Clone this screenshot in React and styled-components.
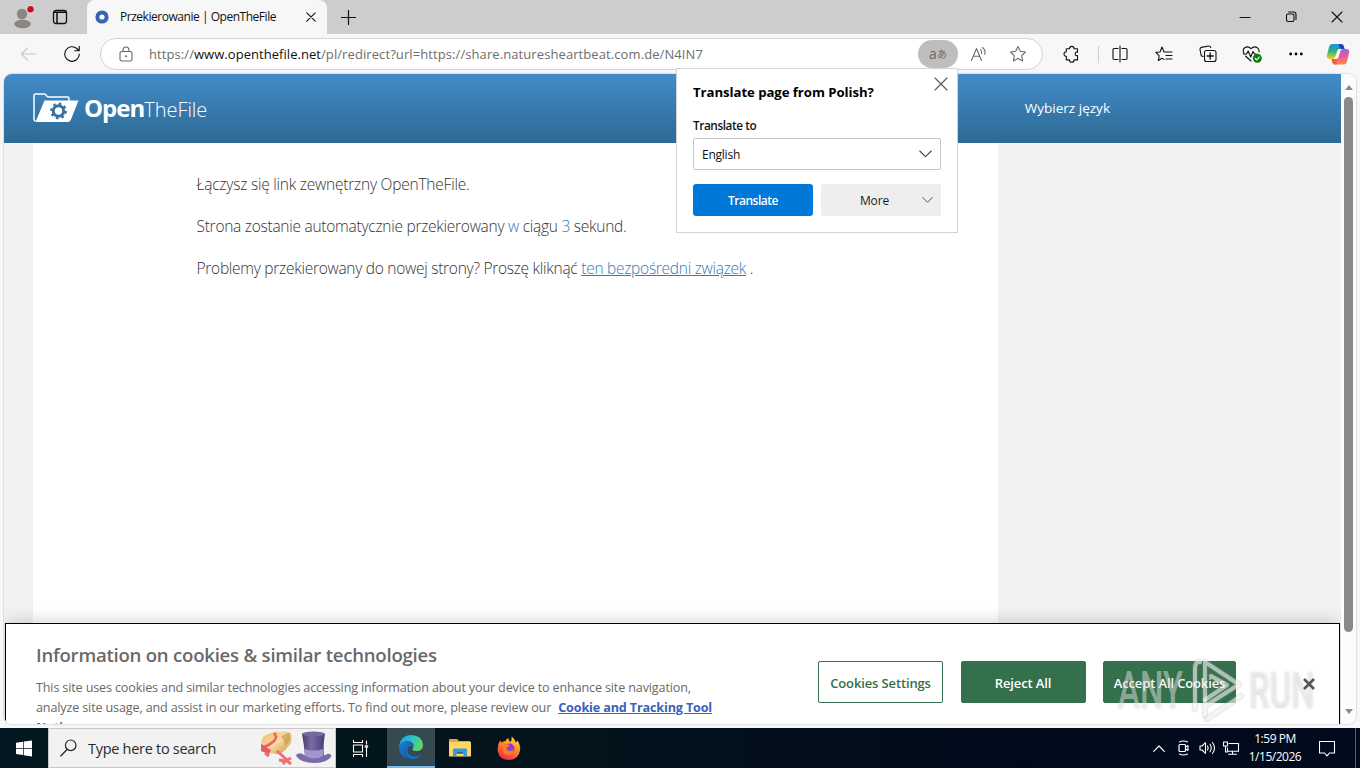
import React from "react";
import styled, { createGlobalStyle } from "styled-components";

export default function App() {
  return (
    <>
      <GlobalStyle />
      <Desktop>
        <TitleBar />
        <Toolbar />
        <BrowserView />
        <Taskbar />
        <TranslatePopup />
        <Watermark />
      </Desktop>
    </>
  );
}

const TitleBar = () => (
  <TitleRow>
    <Cell $w={44}>
      <ProfileIcon />
    </Cell>
    <Cell $w={32}>
      <Icon width="16" height="16" viewBox="0 0 16 16">
        <rect x="1.5" y="1.5" width="13" height="13" rx="2.5" strokeWidth="1.3" />
        <path d="M2 3.3h12M5 4v10.5" strokeWidth="1.5" />
      </Icon>
    </Cell>
    <Tab>
      <svg width="14" height="14" viewBox="0 0 14 14">
        <circle cx="7" cy="7" r="4.6" fill="#fff" stroke="#3765b0" strokeWidth="4" />
      </svg>
      <Label $size={12} $spacing={-0.467}>
        Przekierowanie | OpenTheFile
      </Label>
      <Icon width="10" height="10" viewBox="0 0 10 10">
        <path d="M.8.8l8.4 8.4M9.2.8L.8 9.2" />
      </Icon>
    </Tab>
    <Cell $w={42}>
      <Icon width="15" height="15" viewBox="0 0 15 15">
        <path d="M7.5.5v14M.5 7.5h14" strokeWidth="1.2" />
      </Icon>
    </Cell>
    <WindowButtons>
      <Cell $w={46}>
        <Icon width="12" height="12" viewBox="0 0 12 12">
          <path d="M1 6.5h10" />
        </Icon>
      </Cell>
      <Cell $w={46}>
        <Icon width="12" height="12" viewBox="0 0 12 12">
          <rect x="1.5" y="3" width="7.5" height="7.5" rx="1.5" />
          <path d="M3.5 1h5Q11 1 11 3.5v5" />
        </Icon>
      </Cell>
      <Cell $w={46}>
        <Icon width="12" height="12" viewBox="0 0 12 12">
          <path d="M1 1l10 10M11 1L1 11" />
        </Icon>
      </Cell>
    </WindowButtons>
  </TitleRow>
);

const ProfileIcon = () => (
  <svg width="24" height="24" viewBox="0 0 24 24">
    <circle cx="12" cy="9" r="5.2" fill="#8b8683" />
    <ellipse cx="12.5" cy="19" rx="8.3" ry="4.2" fill="#8b8683" />
    <circle cx="20.5" cy="4.3" r="3.8" fill="#c50f1f" stroke="#e3cfcf" strokeWidth="1.2" />
  </svg>
);

const Toolbar = () => (
  <ToolRow>
    <Cell $w={44} $color="#c8c8c8">
      <Icon width="17" height="14" viewBox="0 0 17 14">
        <path d="M16 7H1.5M7.5 1l-6 6 6 6" />
      </Icon>
    </Cell>
    <Cell $w={44}>
      <Icon width="18" height="18" viewBox="0 0 18 18">
        <path d="M16.3 9A7.300 7.300 0 1 1 13.800 3.500L16 5.500M16.200 1.200v4.500h-4.500" />
      </Icon>
    </Cell>
    <AddressBar>
      <Cell $w={49} $color="#666">
        <Icon width="14" height="16" viewBox="0 0 14 16">
          <rect x="1" y="5.500" width="12" height="9.500" rx="1.800" />
          <path d="M4 5.500V4a3 3 0 0 1 6 0v1.500" />
          <circle cx="7" cy="10.200" r=".5" />
        </Icon>
      </Cell>
      <Url>
        <Label $size={13} $spacing={0.082} $color="#6e6e6e">
          https://
        </Label>
        <Label $size={13} $spacing={0.044}>
          www.openthefile.net
        </Label>
        <Label $size={13} $spacing={0.089} $color="#6e6e6e">
          /pl/redirect?url=https://share.naturesheartbeat.com.de/N4IN7
        </Label>
      </Url>
      <TranslateBadge>
        a<small>あ</small>
      </TranslateBadge>
      <Cell $w={40} $color="#6b6b6b">
        <Icon width="18" height="17" viewBox="0 0 18 17">
          <path d="M2.500 14.500L7.500 2.500l5 12M4.300 10.300h6.400" />
          <path d="M11.500 3.500q1.600 1.800 1 4M13.500 1.500q3.500 2.800 2.300 7" />
        </Icon>
      </Cell>
      <Cell $w={40} $color="#6b6b6b">
        <Icon width="18" height="18" viewBox="0 0 18 18">
          <path d={STAR} />
        </Icon>
      </Cell>
    </AddressBar>
    <Cell $w={44}>
      <Icon width="18" height="18" viewBox="0 0 18 18">
        <path d="M7.500 3.700a2.300 2.300 0 0 1 4.600 0H15.500v3.500q-2.300-.4-2.300 1.700t2.300 1.700v4.300h-3.400a2.300 2.300 0 0 1-4.600 0H4.300v-3.600a2.300 2.300 0 0 1 0-4.600v-3z" />
      </Icon>
    </Cell>
    <Separator />
    <Cell $w={31}>
      <Icon width="18" height="18" viewBox="0 0 18 18">
        <path d="M7 3.500H3.200Q2 3.500 2 4.700v8.600q0 1.200 1.200 1.200H7M11 3.500h3.800q1.200 0 1.200 1.200v8.600q0 1.200-1.200 1.200H11M9 1v16" />
      </Icon>
    </Cell>
    <MainTools>
      <Cell $w={44}>
        <Icon width="18" height="18" viewBox="0 0 18 18">
          <path d="M9 7L7 2 5 7 .8 7.400l3.400 3.400-.9 4.700L7 13.200l2 1.200M9.500 7H17M11 10.500h6M11 14h6" />
        </Icon>
      </Cell>
      <Cell $w={44}>
        <Icon width="18" height="18" viewBox="0 0 18 18">
          <path d="M4 11.500l-1.700-.7L1 4.500Q.8 2.800 2.500 2.400L9.500 1q1.700-.2 2.300 1.500" />
          <rect x="5.500" y="5.500" width="11.500" height="11" rx="2" />
          <path d="M11.200 8v6M8.200 11h6" strokeWidth="1.300" />
        </Icon>
      </Cell>
      <Cell $w={44}>
        <Icon width="20" height="18" viewBox="0 0 20 18">
          <path d="M2 8.500Q0 4.500 3 2.500q3.200-1.700 6 1.200 3-3 6-1.200 2.500 1.500 2 4.500M3.500 11L9 16" />
          <path d="M1.500 9h3l1.700-3 2.500 6L11 6.500l1.500 2.500H14" />
          <circle cx="15.300" cy="13.300" r="4.500" fill="#107c10" stroke="none" />
          <path d="M13.200 13.500l1.500 1.400 2.700-2.900" stroke="#fff" />
        </Icon>
      </Cell>
      <Cell $w={44}>
        <svg width="14" height="4" viewBox="0 0 14 4">
          <circle cx="1.700" cy="2" r="1.400" />
          <circle cx="7" cy="2" r="1.400" />
          <circle cx="12.300" cy="2" r="1.400" />
        </svg>
      </Cell>
      <Cell $w={40}>
        <CopilotIcon />
      </Cell>
    </MainTools>
  </ToolRow>
);

const STAR =
  "M9 1.500l2.300 4.800 5.200.7-3.800 3.700.9 5.200L9 13.400l-4.600 2.500.9-5.200L1.500 7l5.200-.7z";

const CopilotIcon = () => (
  <svg width="24" height="22" viewBox="0 0 24 22">
    <defs>
      <linearGradient id="cpa" x1="0" y1="0" x2="0" y2="1">
        <stop offset="0" stopColor="#1b8fe0" />
        <stop offset=".5" stopColor="#35b17b" />
        <stop offset="1" stopColor="#f5d018" />
      </linearGradient>
      <linearGradient id="cpb" x1="0" y1="0" x2="0" y2="1">
        <stop offset="0" stopColor="#a85ce6" />
        <stop offset=".5" stopColor="#ee5a8c" />
        <stop offset="1" stopColor="#fb8b48" />
      </linearGradient>
    </defs>
    <path d="M6 1h9q2 0 2.700 2l.8 3h-5q-1.700 0-2.200 1.700L9.200 14q-.7 2-2.700 2H4q-4 0-3-4l2-8q.8-3 3-3z" fill="url(#cpa)" />
    <path d="M13 1h2q2 0 2.700 2l.8 3h-3.300Q13.700 6 13 3.500z" fill="#1947b8" />
    <path d="M18 21.500H9q-2 0-2.600-2L5.500 16H10q2 0 2.500-1.700l2-6.600Q15 6 17 6h3q4 0 3 4l-2 8.500q-.8 3-3 3z" fill="url(#cpb)" />
    <path d="M11 21.500H9q-2 0-2.600-2L5.500 16h3.200q1.600 0 2.200 2.500z" fill="#f1603c" />
  </svg>
);

const BrowserView = () => (
  <Frame>
    <Viewport>
      <Page>
        <SiteHeader>
          <Brand>
            <FolderLogo />
            <BrandName>
              <Label $size={24} $weight={700} $spacing={-1}>
                Open
              </Label>
              <Label $size={20} $weight={300} $spacing={-0.05}>
                TheFile
              </Label>
            </BrandName>
          </Brand>
          <Label $size={13.5} $spacing={0.02}>
            Wybierz język
          </Label>
        </SiteHeader>
        <Content>
          <Paragraph $spacing={-0.222}>Łączysz się link zewnętrzny OpenTheFile.</Paragraph>
          <Paragraph $spacing={-0.261}>
            Strona zostanie automatycznie przekierowany <em>w</em> ciągu <em>3</em> sekund.
          </Paragraph>
          <Paragraph $spacing={-0.27}>
            Problemy przekierowany do nowej strony? Proszę kliknąć{" "}
            <a>ten bezpośredni związek</a> .
          </Paragraph>
        </Content>
        <CookieBanner />
      </Page>
      <ScrollTrack>
        <Arrow />
        <Thumb />
        <Arrow $down />
      </ScrollTrack>
    </Viewport>
  </Frame>
);

const FolderLogo = () => (
  <svg width="46" height="30" viewBox="0 0 46 30">
    <path
      d="M2.500 28Q1 28 1 26.500V2.500Q1 1 2.500 1h9q1.200 0 1.800 1.500T15.500 4h19Q36 4 36 5.500V8"
      fill="none"
      stroke="#fff"
      strokeWidth="1.500"
    />
    <path d="M11.500 7.500h34L38 26.500Q37 29 34.500 29H2.500z" fill="#fff" />
    <circle cx="25.500" cy="18" r="5.200" fill="none" stroke="#37709f" strokeWidth="3" />
    <circle cx="25.500" cy="18" r="7.300" fill="none" stroke="#37709f" strokeWidth="2.200" strokeDasharray="2.600 3.133" />
  </svg>
);

const CookieBanner = () => (
  <Banner>
    <BannerText>
      <h2>Information on cookies &amp; similar technologies</h2>
      <p>
        This site uses cookies and similar technologies accessing information about your device to
        enhance site navigation,
        <br />
        analyze site usage, and assist in our marketing efforts. To find out more, please review our
        <a>Cookie and Tracking Tool</a>
        <br />
        <a>Notice</a>
      </p>
    </BannerText>
    <BannerButtons>
      <BannerButton $w={125} $outline>
        Cookies Settings
      </BannerButton>
      <BannerButton $w={125}>Reject All</BannerButton>
      <BannerButton $w={133}>Accept All Cookies</BannerButton>
    </BannerButtons>
  </Banner>
);

const TranslatePopup = () => (
  <Popup>
    <PopupHead>
      <Label $size={13.2} $weight={700} $spacing={-0.06} $color="#000">
        Translate page from Polish?
      </Label>
      <Icon width="14" height="14" viewBox="0 0 14 14">
        <path d="M1 1l12 12M13 1L1 13" />
      </Icon>
    </PopupHead>
    <Label $size={11.8} $weight={600} $spacing={-0.42}>
      Translate to
    </Label>
    <Select>
      <Label $size={12} $spacing={-0.24}>
        English
      </Label>
      <Chevron $size={13} />
    </Select>
    <PopupActions>
      <PopupButton $primary>Translate</PopupButton>
      <PopupButton>
        More
        <Chevron $size={11} />
      </PopupButton>
    </PopupActions>
  </Popup>
);

const Chevron = ({ $size }) => (
  <Icon width={$size} height={8} viewBox="0 0 13 8" color="#444">
    <path d="M.8 1l5.700 5.700L12.200 1" />
  </Icon>
);

const Watermark = () => (
  <Mark>
    <MarkText>ANY</MarkText>
    <svg width="56" height="66" viewBox="0 0 56 66">
      <g fill="none" strokeLinejoin="round" strokeLinecap="round">
        <g stroke="#999" strokeOpacity=".22" strokeWidth="6.500">
          <path d="M11 5Q6 4 6 12v40M16 58V5l34 22.500-33 21" />
          <path d="M18 62l34-23M22 19l16 9-22 15" />
        </g>
        <g stroke="#fff" strokeOpacity=".55" strokeWidth="4">
          <path d="M11 5Q6 4 6 12v40M16 58V5l34 22.500-33 21" />
          <path d="M18 62l34-23M22 19l16 9-22 15" />
        </g>
      </g>
    </svg>
    <MarkText>RUN</MarkText>
    <CloseMark width="14" height="14" viewBox="0 0 14 14">
      <path d="M2 2l10 10M12 2L2 12" strokeWidth="2.600" />
    </CloseMark>
  </Mark>
);

const Taskbar = () => (
  <TaskRow>
    <Cell $w={48}>
      <svg width="16" height="17" viewBox="0 0 16 17" fill="#fff">
        <path d="M0 2.700l7-1V8H0zM7.700 1.600L16 .5V8H7.700zM0 8.800h7v6.300l-7-1zM7.700 8.800H16v7.700l-8.300-1.200z" />
      </svg>
    </Cell>
    <Search>
      <Icon width="17" height="18" viewBox="0 0 17 18">
        <circle cx="10.700" cy="6.300" r="5.300" strokeWidth="1.200" />
        <path d="M7 10.500L.8 17" strokeWidth="1.200" />
      </Icon>
      <Label $size={14.5} $spacing={-0.286} $color="#2b2b2b">
        Type here to search
      </Label>
      <Hats />
    </Search>
    <Cell $w={48} $color="#fff">
      <Icon width="17" height="17" viewBox="0 0 17 17">
        <rect x="1.500" y="5" width="9" height="7" />
        <path d="M1.500.5v2h9v-2M1.500 16.500v-2h9v2M14.500 1v3M14.500 8v8.500" />
        <path d="M13.300 5.500h2.500v2h-2.500z" fill="#fff" strokeWidth=".5" />
      </Icon>
    </Cell>
    <ActiveTask>
      <EdgeIcon />
    </ActiveTask>
    <Cell $w={49}>
      <ExplorerIcon />
    </Cell>
    <Cell $w={49}>
      <FirefoxIcon />
    </Cell>
    <Tray>
      <Cell $w={24}>
        <Icon width="12" height="7" viewBox="0 0 12 7">
          <path d="M.7 6.300L6 1l5.300 5.300" strokeWidth="1.200" />
        </Icon>
      </Cell>
      <Cell $w={24}>
        <Icon width="13" height="16" viewBox="0 0 13 16">
          <rect x="2" y="4.500" width="6.500" height="7" rx="1" strokeWidth="1.200" />
          <path d="M8.500 7l2.500-1.500v5L8.500 9M2.500 2q4-2 8 0M2.500 14q4 2 8 0" />
        </Icon>
      </Cell>
      <Cell $w={24}>
        <Icon width="17" height="14" viewBox="0 0 17 14">
          <path d="M1 5v4h2l3.500 3.300V1.700L3 5zM8.500 5q1.200 2 0 4M11 3.200q2.500 3.800 0 7.600M13.500 1.500q4 5.500 0 11" />
        </Icon>
      </Cell>
      <Cell $w={24}>
        <Icon width="17" height="14" viewBox="0 0 17 14">
          <path d="M6 2.500h9.500v7.700h-11V7M9.500 10v3M5.500 13.300h8" />
          <path d="M.5 1h4v4h-4zM2.500 5v6h2" />
        </Icon>
      </Cell>
      <Clock>
        <span>1:59 PM</span>
        <span>1/15/2026</span>
      </Clock>
      <Cell $w={40}>
        <Icon width="17" height="17" viewBox="0 0 17 17">
          <path d="M.5 1.500h15v11.500h-5L8 15.800 5.500 13h-5z" />
        </Icon>
      </Cell>
    </Tray>
  </TaskRow>
);

const Hats = () => (
  <svg width="73" height="36" viewBox="0 0 73 36">
    <defs>
      <linearGradient id="straw" x1="0" y1="0" x2="1" y2="1">
        <stop offset="0" stopColor="#eeb866" />
        <stop offset=".5" stopColor="#f9dca0" />
        <stop offset="1" stopColor="#c98a3e" />
      </linearGradient>
      <linearGradient id="silk" x1="0" y1="0" x2="1" y2="0">
        <stop offset="0" stopColor="#473e68" />
        <stop offset=".4" stopColor="#7a6ba6" />
        <stop offset="1" stopColor="#493d70" />
      </linearGradient>
    </defs>
    <path d="M3 18Q0 6 10 4q5-3 11-2 7-2 11 1 3 9-5 16-6 7-14 4-8 2-10-5z" fill="url(#straw)" />
    <path d="M22 7q6-5 9-4 2 7-5 13 0-6-4-9z" fill="#b9803b" opacity=".5" />
    <path d="M15 3q4 4 0 8T5 17" fill="none" stroke="#e9636d" strokeWidth="2.500" />
    <path d="M2 14l6 3-1 6-5-2zM7 17l5 3-2 4-4 1z" fill="#e55c66" />
    <path d="M6 23l4 3M18 21l10 9M20 30l6 1 6-3M27 30l5 4M27 30l-3 4" fill="none" stroke="#ee6f78" strokeWidth="3" />
    <path d="M38 24q4-2 7 1h22q1-2 4-1 2 1 1 3-5 6-17 6-13 0-18-7z" fill="#7c6baa" />
    <path d="M43 4q11-4 23 0-2 10-1 22-9 5-19 0-1-12-3-22z" fill="url(#silk)" />
    <path d="M45.500 19q9.500 3 19 0v7q-9 5-18.500 0z" fill="#a395cf" />
    <ellipse cx="54.500" cy="4" rx="11.500" ry="2.500" fill="#75699b" />
  </svg>
);

const EdgeIcon = () => (
  <svg width="26" height="26" viewBox="0 0 26 26">
    <defs>
      <linearGradient id="wave" x1="0" y1=".3" x2="1" y2=".6">
        <stop offset="0" stopColor="#1b9de2" />
        <stop offset=".5" stopColor="#2cc4c9" />
        <stop offset="1" stopColor="#62d957" />
      </linearGradient>
      <linearGradient id="deep" x1="0" y1="0" x2="1" y2="1">
        <stop offset="0" stopColor="#1683d8" />
        <stop offset="1" stopColor="#0f4f9f" />
      </linearGradient>
    </defs>
    <path d="M1 12Q3 1 13 1q11 0 12 10 0 6-7 6-5 0-3-3 2-5-3-6.500Q5 6 1 12z" fill="url(#wave)" />
    <path d="M1 12q4-6 10-4.500 4 1 4 5-5-2-5.500 3-.3 7 6 9Q4 27 1.200 16z" fill="url(#deep)" />
    <path d="M9.500 15q-1 5 4 7 6 1.500 10-2-4 6-10 5Q5 22 9.500 15z" fill="#1b6fb8" />
  </svg>
);

const ExplorerIcon = () => (
  <svg width="22" height="20" viewBox="0 0 22 20">
    <path d="M0 2Q0 1 1 1h7l2 2h11v7H0z" fill="#e6a72c" />
    <path d="M0 4h22v14.500H0z" fill="#fcd667" />
    <path d="M4 18.500v-7Q4 10.500 5 10.500h12q1 0 1 1v7h-3.500V14h-7v4.500z" fill="#3b99d6" />
    <path d="M7.500 14h7v1.800h-7z" fill="#1d6da6" />
  </svg>
);

const FirefoxIcon = () => (
  <svg width="24" height="25" viewBox="0 0 24 25">
    <defs>
      <linearGradient id="fire" x1=".8" y1="0" x2=".3" y2="1">
        <stop offset="0" stopColor="#ffe53f" />
        <stop offset=".45" stopColor="#ff8a25" />
        <stop offset="1" stopColor="#f0264f" />
      </linearGradient>
    </defs>
    <path
      d="M3.500 4q0 2 1 2.500Q6 5 8.500 5q1-2.500 3-3-.5 2.500 2 4 1.500-2 1-5.500 3 2 4.500 6l1.500-2q3.500 5 2.500 10-1.500 9-10.500 9.500Q2 24 .7 15 0 8.500 3.500 4z"
      fill="url(#fire)"
    />
    <circle cx="12.500" cy="12.500" r="5" fill="#8b3fd6" />
    <path d="M5.500 9q3-2 7 0 0 2-3 2.500 0 3 3 3.500 3-.2 4-2 0 6-6 6-6-1-5-10z" fill="#ff7a2b" />
  </svg>
);

const GlobalStyle = createGlobalStyle`
  * {
    box-sizing: border-box;
  }

  body {
    margin: 0;
    overflow: hidden;
    font-family: "Open Sans", "Noto Sans", "Noto Sans CJK JP", sans-serif;
    font-size: 12px;
    color: #111;
  }

  svg {
    display: block;
    flex-shrink: 0;
  }
`;

const Desktop = styled.div`
  position: relative;
  display: flex;
  flex-direction: column;
  width: 1360px;
  height: 768px;
  overflow: hidden;
  background: #f7f7f7;
`;

const Icon = styled.svg`
  fill: none;
  stroke: currentColor;
  stroke-width: 1.1;
  stroke-linecap: round;
  stroke-linejoin: round;
`;

const Label = styled.span`
  font-size: ${(p) => p.$size}px;
  font-weight: ${(p) => p.$weight || 400};
  letter-spacing: ${(p) => p.$spacing || 0}px;
  color: ${(p) => p.$color || "inherit"};
  white-space: nowrap;
`;

const Cell = styled.div`
  display: flex;
  flex: none;
  align-items: center;
  justify-content: center;
  width: ${(p) => p.$w}px;
  height: 100%;
  color: ${(p) => p.$color || "inherit"};
`;

const TitleRow = styled.header`
  display: flex;
  height: 34px;
  background: #cdcdcd;

  > div:nth-child(2) {
    margin-right: 11px;
  }
`;

const Tab = styled.div`
  display: flex;
  align-items: center;
  width: 240px;
  padding: 0 11px 0 8px;
  border-radius: 8px 8px 0 0;
  background: #f7f7f7;

  span {
    flex: 1;
    margin-left: 11px;
    padding-bottom: 2px;
  }
`;

const WindowButtons = styled.div`
  display: flex;
  margin-left: auto;
`;

const ToolRow = styled.div`
  display: flex;
  align-items: center;
  height: 40px;
  padding-left: 6px;
`;

const AddressBar = styled.div`
  display: flex;
  align-items: center;
  width: 943px;
  height: 32px;
  margin: 0 6px;
  padding-right: 4px;
  border: 1px solid #d3d3d3;
  border-radius: 16px;
  background: #fff;
`;

const Url = styled.div`
  display: flex;
  flex: 1;
  margin-left: -1px;
`;

const TranslateBadge = styled.div`
  display: flex;
  align-items: center;
  justify-content: center;
  width: 40px;
  height: 28px;
  border-radius: 14px;
  background: #bebebe;
  color: #6b6b6b;
  font-size: 14px;
  line-height: 20px;

  small {
    font-size: 10px;
  }
`;

const Separator = styled.div`
  width: 1px;
  height: 17px;
  margin: 0 5px;
  background: #cfcfcf;
`;

const MainTools = styled.div`
  display: flex;
  align-items: center;
  height: 100%;
  margin-left: 7px;
`;

const Frame = styled.div`
  height: 654px;
  padding: 0 4px 4px;
`;

const Viewport = styled.div`
  display: flex;
  height: 650px;
  overflow: hidden;
  border-radius: 8px;
  background: #fcfcfc;
  box-shadow: 0 0 1px 1px #dedede;
`;

const Page = styled.div`
  position: relative;
  width: 1337px;
  height: 100%;
  overflow: hidden;
  background: #f2f2f2;
`;

const SiteHeader = styled.div`
  display: flex;
  align-items: center;
  justify-content: space-between;
  height: 69px;
  padding: 0 231px 2px 29px;
  background: linear-gradient(#428bca, #2d6a94);
  color: #fff;
`;

const Brand = styled.div`
  display: flex;
  align-items: center;
`;

const BrandName = styled.div`
  display: flex;
  align-items: baseline;
  margin-left: 5px;
`;

const Content = styled.main`
  width: 965px;
  height: 581px;
  margin-left: 29px;
  padding: 30px 0 0 163.5px;
  background: #fff;
`;

const Paragraph = styled.p`
  margin: 0 0 20px;
  color: #333;
  font-size: 15.5px;
  font-weight: 300;
  line-height: 22px;
  letter-spacing: ${(p) => p.$spacing}px;
  white-space: nowrap;

  em,
  a {
    color: #337ab7;
    font-style: normal;
  }

  a {
    text-decoration: underline;
  }
`;

const Banner = styled.section`
  position: absolute;
  top: 549px;
  left: 1px;
  display: flex;
  justify-content: space-between;
  width: 1335px;
  height: 130px;
  padding: 19px 103px 0 30px;
  border: 1px solid #000;
  background: #fff;
  box-shadow: 0 0 18px rgba(0, 0, 0, 0.2);
`;

const BannerText = styled.div`
  color: #696969;

  h2 {
    margin: 0 0 11px;
    font-size: 18.6px;
    font-weight: 600;
    line-height: 24px;
    letter-spacing: -0.24px;
    white-space: nowrap;
  }

  p {
    margin: 0;
    font-size: 12.6px;
    line-height: 20px;
    letter-spacing: -0.15px;
    white-space: nowrap;
  }

  a {
    color: #3860be;
    font-weight: 700;
    text-decoration: underline;
    letter-spacing: -0.14px;
  }

  a:first-of-type {
    margin-left: 7px;
  }
`;

const BannerButtons = styled.div`
  display: flex;
  gap: 17.5px;
  margin-top: 18px;
`;

const BannerButton = styled.button`
  width: ${(p) => p.$w}px;
  height: 42px;
  padding: 2px 0 0;
  border: 1px solid #34704b;
  border-radius: 2px;
  background: ${(p) => (p.$outline ? "#fff" : "#34704b")};
  color: ${(p) => (p.$outline ? "#34704b" : "#fff")};
  font-family: inherit;
  font-size: 13px;
  font-weight: 600;
  letter-spacing: -0.13px;
  white-space: nowrap;
`;

const ScrollTrack = styled.div`
  display: flex;
  flex-direction: column;
  align-items: center;
  width: 15px;
  padding: 11px 0 10px;
`;

const Arrow = styled.i`
  border: 4.5px solid transparent;
  border-top-width: ${(p) => (p.$down ? 5 : 0)}px;
  border-bottom-width: ${(p) => (p.$down ? 0 : 5)}px;
  border-top-color: #8a8a8a;
  border-bottom-color: #8a8a8a;
  ${(p) => p.$down && "margin-top: auto;"}
`;

const Thumb = styled.div`
  width: 9px;
  height: 535px;
  margin-top: 7px;
  border-radius: 5px;
  background: #8a8a8a;
`;

const Popup = styled.aside`
  position: absolute;
  top: 68px;
  left: 676px;
  display: flex;
  flex-direction: column;
  width: 282px;
  height: 165px;
  padding: 8px 16px 0;
  border: 1px solid #d4d4d4;
  background: #fff;

  > span {
    margin-top: 14px;
    line-height: 18px;
  }
`;

const PopupHead = styled.div`
  display: flex;
  justify-content: space-between;
  height: 25px;
  margin-right: -7px;
  color: #555;

  span {
    padding-top: 6px;
    line-height: 18px;
  }
`;

const Select = styled.div`
  display: flex;
  align-items: center;
  justify-content: space-between;
  height: 32px;
  margin-top: 4px;
  padding: 0 8px;
  border: 1px solid #c6c6c6;
  border-radius: 2px;
`;

const PopupActions = styled.div`
  display: flex;
  gap: 8px;
  margin-top: 14px;
`;

const PopupButton = styled.button`
  display: flex;
  align-items: center;
  justify-content: ${(p) => (p.$primary ? "center" : "flex-end")};
  gap: 33px;
  width: 120px;
  height: 32px;
  padding: ${(p) => (p.$primary ? 0 : "0 8px")};
  border: 0;
  border-radius: 3px;
  background: ${(p) => (p.$primary ? "#0078d7" : "#eee")};
  color: ${(p) => (p.$primary ? "#fff" : "#1b1b1b")};
  font-family: inherit;
  font-size: 12px;
  font-weight: ${(p) => (p.$primary ? 600 : 400)};
  letter-spacing: ${(p) => (p.$primary ? -0.5 : -0.16)}px;
`;

const Mark = styled.div`
  position: absolute;
  top: 657px;
  left: 1118px;
  display: flex;
  align-items: center;
  justify-content: space-between;
  width: 197px;
  height: 66px;
`;

const MarkText = styled.span`
  width: 66px;
  color: rgba(255, 255, 255, 0.42);
  font-family: Roboto, sans-serif;
  font-size: 50px;
  font-weight: 500;
  line-height: 66px;
  text-shadow: 0 1px 3px rgba(90, 90, 90, 0.25);
  transform: scaleX(0.66);
  transform-origin: 0 50%;
`;

const CloseMark = styled(Icon)`
  position: absolute;
  top: 20px;
  left: 184px;
  color: #555;
  stroke-linecap: butt;
`;

const TaskRow = styled.footer`
  display: flex;
  height: 40px;
  background: linear-gradient(to right, #031820, #03131c 45%, #010a1b 75%, #020b1d);
  color: #fff;
`;

const Search = styled.div`
  display: flex;
  align-items: center;
  width: 288px;
  padding: 0 3px 0 11px;
  border: 1px solid #c8c8c8;
  background: #f2f2f2;
  color: #222;

  span {
    flex: 1;
    margin-left: 11px;
  }
`;

const ActiveTask = styled.div`
  display: flex;
  align-items: center;
  justify-content: center;
  width: 48px;
  margin-left: 3px;
  border-bottom: 2px solid #76b9ed;
  background: #354950;
`;

const Tray = styled.div`
  display: flex;
  align-items: center;
  width: 209px;
  margin: 0 4px 0 auto;
  border-right: 1px solid #59616c;
`;

const Clock = styled.div`
  display: flex;
  flex-direction: column;
  align-items: center;
  width: 64px;
  padding-bottom: 1px;
  font-size: 12px;
  line-height: 18px;
  letter-spacing: -0.48px;
`;
